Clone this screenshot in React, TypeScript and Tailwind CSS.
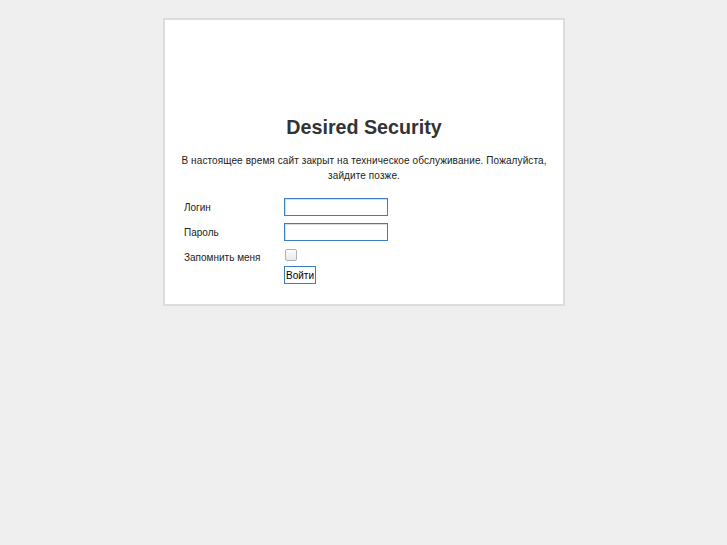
export default function App() {
  return (
    <div className="min-h-[545px] bg-[#efefef] pt-[18px] font-['Liberation_Sans',Arial,sans-serif] text-[#333]">
      <div className="ml-[163px] w-[402px] border-2 border-[#dcdcdc] bg-white px-[14px] pt-[95px] pb-[20px]">
        <h1 className="text-center text-[19.7px] leading-[24px] font-bold text-[#333]">Desired Security</h1>
        <p className="mt-[14px] text-center text-[10px] leading-[15px] tracking-[0.1px] text-[#222]">
          В настоящее время сайт закрыт на техническое обслуживание. Пожалуйста, зайдите позже.
        </p>
        <form className="mt-[15px] grid grid-cols-[100px_1fr] gap-y-[7px] pl-[5px] text-[10px] text-[#222]">
          <label className="flex items-center">Логин</label>
          <input className="h-[18px] w-[104px] border border-[#3a7fc0] bg-white shadow-[inset_1px_1px_1px_rgba(0,0,0,0.15)] outline-none" />
          <label className="flex items-center">Пароль</label>
          <input type="password" className="h-[18px] w-[104px] border border-[#3a7fc0] bg-white shadow-[inset_1px_1px_1px_rgba(0,0,0,0.15)] outline-none" />
          <label className="mt-[1px] flex h-[13px] items-center pt-[3px]">Запомнить меня</label>
          <div className="mt-[1px] flex flex-col items-start">
            <span className="ml-[1px] block h-[12px] w-[12px] rounded-[2px] border border-[#b0b0b0] bg-gradient-to-b from-[#fcfcfc] to-[#e8e8e8]" />
          </div>
          <div />
          <button type="button" className="-mt-[3px] h-[18px] w-fit border border-[#3a7fc0] bg-white px-[1px] text-[10px] leading-[15px] text-black">Войти</button>
        </form>
      </div>
    </div>
  );
}
